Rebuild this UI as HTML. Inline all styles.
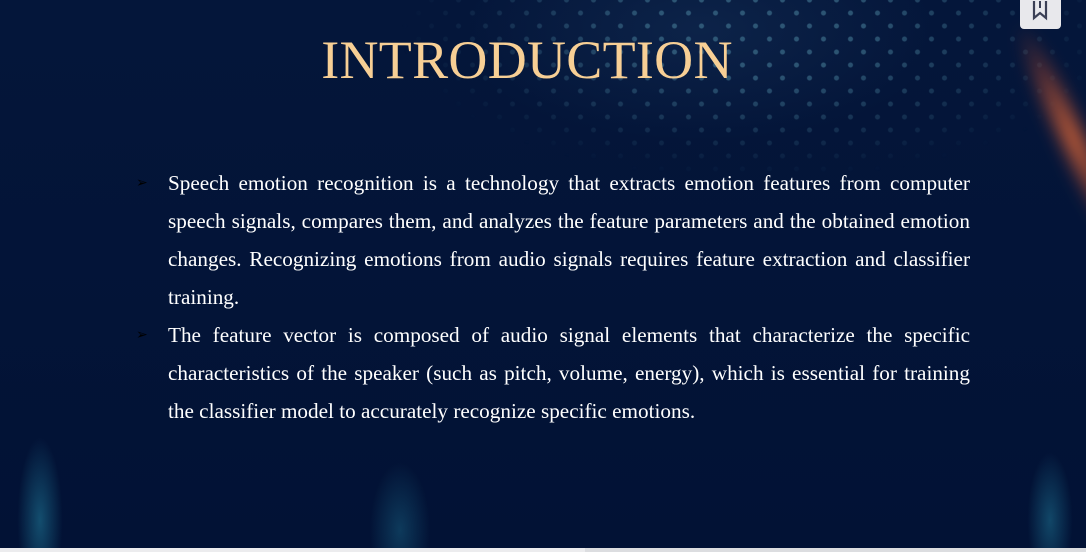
<!DOCTYPE html>
<html><head><meta charset="utf-8"><style>
html,body{margin:0;padding:0}
body{width:1086px;height:552px;overflow:hidden;position:relative;background:#04153a;font-family:"Liberation Serif",serif}
.bg{position:absolute;inset:0;background:
radial-gradient(ellipse 30px 110px at 40px 520px,rgba(40,150,180,.45),transparent 75%),
radial-gradient(ellipse 40px 90px at 400px 530px,rgba(40,150,180,.3),transparent 75%),
radial-gradient(ellipse 30px 90px at 1050px 520px,rgba(40,150,180,.4),transparent 75%),
radial-gradient(ellipse 300px 140px at 700px 30px,rgba(25,55,95,.4),transparent 80%),
linear-gradient(#04163a,#021235)}
.streak{position:absolute;left:1000px;top:25px;width:40px;height:230px;transform:rotate(-25deg);transform-origin:top center;background:radial-gradient(ellipse at 50% 55%,rgba(235,110,55,.85),rgba(170,70,45,.4) 45%,transparent 72%);filter:blur(7px)}
.dots{position:absolute;inset:0;background-image:radial-gradient(circle,rgba(80,140,165,.5) 2px,transparent 3px),radial-gradient(circle,rgba(80,140,165,.5) 2px,transparent 3px);background-size:27px 26px;background-position:0 0,13px 13px;-webkit-mask:radial-gradient(ellipse 360px 150px at 760px 30px,#000 30%,transparent 100%);mask:radial-gradient(ellipse 360px 150px at 760px 30px,#000 30%,transparent 100%)}
h1{position:absolute;top:29px;left:0;width:1054px;text-align:center;margin:0;font-weight:normal;color:#f7cf95;font-size:54px;letter-spacing:.3px}
.txt{position:absolute;left:168px;top:164px;width:802px;color:#fff;font-size:21.2px;line-height:38px}
.txt p{margin:0;position:relative}
.txt span{display:block;text-align:justify;text-align-last:justify;white-space:nowrap}
.txt span.l{text-align-last:left}
.txt p:before{content:"➢";position:absolute;left:-32px;color:#000;font-family:"DejaVu Sans";font-size:14px}
.bm{position:absolute;left:1020px;top:-4px;width:41px;height:33px;background:#e8e8ec;border-radius:4px}
.bar{position:absolute;left:0;top:548px;width:1086px;height:4px;background:#dcdde0}
.bar:before{content:"";position:absolute;left:0;top:0;width:585px;height:4px;background:#ececee}
</style></head><body>
<div class="bg"></div><div class="dots"></div><div class="streak"></div>
<h1>INTRODUCTION</h1>
<div class="txt">
<p><span>Speech emotion recognition is a technology that extracts emotion features from computer</span><span>speech signals, compares them, and analyzes the feature parameters and the obtained emotion</span><span>changes. Recognizing emotions from audio signals requires feature extraction and classifier</span><span class="l">training.</span></p>
<p><span>The feature vector is composed of audio signal elements that characterize the specific</span><span>characteristics of the speaker (such as pitch, volume, energy), which is essential for training</span><span class="l">the classifier model to accurately recognize specific emotions.</span></p>
</div>
<div class="bm"><svg width="41" height="33" viewBox="0 0 41 33"><path d="M14 5v17l6-5 6 5V5" fill="none" stroke="#3a3f55" stroke-width="2.2"/><path d="M20 5v7" stroke="#3a3f55" stroke-width="2"/></svg></div>
<div class="bar"></div>
</body></html>
